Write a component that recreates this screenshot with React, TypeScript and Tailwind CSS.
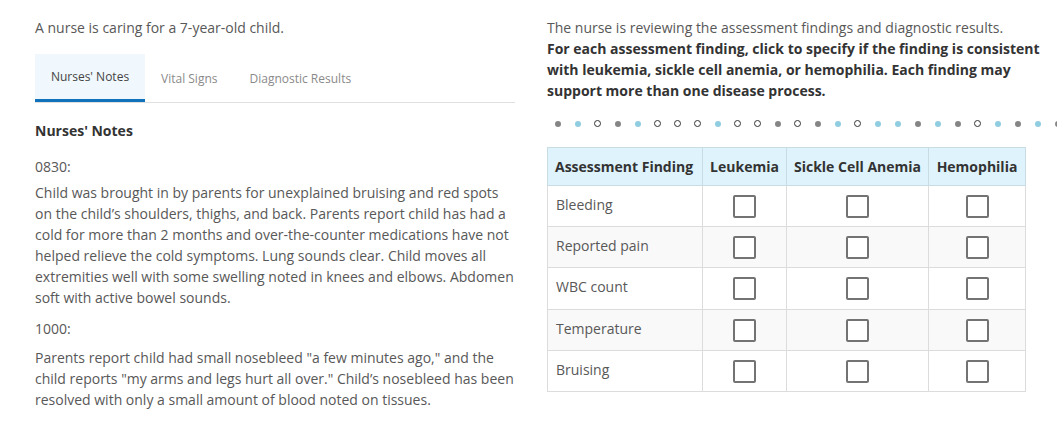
const dots = 'gbhgbhhhbhhghgbhbbgbghbgbg'.split('');

const findings = ['Bleeding', 'Reported pain', 'WBC count', 'Temperature', 'Bruising'];

function Box() {
  return <span className="inline-block w-[23px] h-[23px] border-2 border-[#737373] rounded-[2px] bg-white align-middle" />;
}

export default function App() {
  return (
    <div className="w-[1057px] h-[428px] overflow-hidden bg-white text-[#585858] font-['Open_Sans',sans-serif] text-[14px] leading-[21px]">
      <div className="flex gap-8 pl-[35px] pt-[17px]">
        {/* left column */}
        <div className="w-[480px] shrink-0">
          <p>A nurse is caring for a 7-year-old child.</p>
          <div className="mt-[16px] flex border-b border-[#e0e0e0] text-[12px]">
            <div className="h-[48px] w-[110px] flex items-center justify-center bg-[#f0f8fd] border-b-[3px] border-[#0f72ba] text-[#444] mb-[-1px]">
              Nurses' Notes
            </div>
            <div className="h-[48px] px-[16px] flex items-center text-[#8a8a8a]">Vital Signs</div>
            <div className="h-[48px] px-[16px] flex items-center text-[#8a8a8a]">Diagnostic Results</div>
          </div>
          <h3 className="mt-[17px] font-bold text-[14px] text-[#333]">Nurses' Notes</h3>
          <p className="mt-[15px]">0830:</p>
          <p className="mt-[5px]">
            Child was brought in by parents for unexplained bruising and red spots on the child’s shoulders, thighs, and back. Parents report child has had a cold for more than 2 months and over-the-counter medications have not helped relieve the cold symptoms. Lung sounds clear. Child moves all extremities well with some swelling noted in knees and elbows. Abdomen soft with active bowel sounds.
          </p>
          <p className="mt-[10px]">1000:</p>
          <p className="mt-[8px]">
            Parents report child had small nosebleed "a few minutes ago," and the child reports "my arms and legs hurt all over." Child’s nosebleed has been resolved with only a small amount of blood noted on tissues.
          </p>
        </div>

        {/* right column */}
        <div className="w-[500px] shrink-0">
          <p>The nurse is reviewing the assessment findings and diagnostic results.</p>
          <p className="font-bold text-[#333]">
            For each assessment finding, click to specify if the finding is consistent with leukemia, sickle cell anemia, or hemophilia. Each finding may support more than one disease process.
          </p>
          <div className="mt-[19px] flex gap-[13px] pl-[7px] h-[7px] items-center w-[560px]">
            {dots.map((d, i) => (
              <span
                key={i}
                className={
                  d === 'g'
                    ? 'w-[6px] h-[6px] rounded-full bg-[#858585] shrink-0 mx-[0.5px]'
                    : d === 'b'
                    ? 'w-[6px] h-[6px] rounded-full bg-[#90cde0] shrink-0 mx-[0.5px]'
                    : 'w-[7px] h-[7px] rounded-full border-[1.5px] border-[#333] bg-white shrink-0'
                }
              />
            ))}
          </div>
          <table className="mt-[20px] w-[479px] border-collapse table-fixed">
            <thead>
              <tr className="bg-[#dff3fc] h-[38px] text-[#333] whitespace-nowrap">
                <th className="border border-[#c9dbe3] text-left px-[7px] w-[155px] font-bold">Assessment Finding</th>
                <th className="border border-[#c9dbe3] w-[84px] font-bold">Leukemia</th>
                <th className="border border-[#c9dbe3] w-[142px] font-bold">Sickle Cell Anemia</th>
                <th className="border border-[#c9dbe3] font-bold">Hemophilia</th>
              </tr>
            </thead>
            <tbody>
              {findings.map((f, i) => (
                <tr key={f} className={`h-[41.2px] ${i % 2 ? 'bg-[#f9f9f9]' : 'bg-white'}`}>
                  <td className="border border-[#dcdcdc] px-[8px] pb-[3px]">{f}</td>
                  <td className="border border-[#dcdcdc] text-center"><Box /></td>
                  <td className="border border-[#dcdcdc] text-center"><Box /></td>
                  <td className="border border-[#dcdcdc] text-center"><Box /></td>
                </tr>
              ))}
            </tbody>
          </table>
        </div>
      </div>
    </div>
  );
}
